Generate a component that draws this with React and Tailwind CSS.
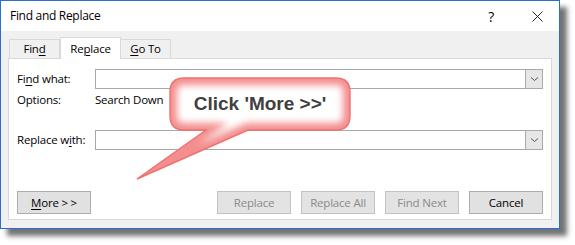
import React from "react";

const U = ({ children }) => <span className="underline underline-offset-2">{children}</span>;

function Combo() {
  return (
    <div className="flex h-[20px] flex-1 border border-[#a9a9a9] bg-white">
      <div className="flex-1" />
      <div className="flex w-[17px] items-center justify-center border-l border-[#a9a9a9] bg-[#e6e6e6]">
        <svg width="9" height="6" viewBox="0 0 9 6">
          <path d="M1 1.5 L4.5 4.5 L8 1.5" fill="none" stroke="#555" strokeWidth="1" />
        </svg>
      </div>
    </div>
  );
}

function Btn({ children, disabled }) {
  return (
    <div
      className={
        "flex h-[23px] w-[74px] items-center justify-center border " +
        (disabled ? "border-[#c2c2c2] bg-[#e3e3e3] text-[#8a8a8a]" : "border-[#adadad] bg-[#e1e1e1] text-black")
      }
    >
      {children}
    </div>
  );
}

const SHAPE =
  "M184 78 H336 Q350 78 350 92 V116 Q350 130 336 130 H248 L137 179 L206 130 H184 Q170 130 170 116 V92 Q170 78 184 78 Z";

export default function App() {
  return (
    <div
      className="relative h-[245px] w-[575px] bg-white text-[11.5px] tracking-[-0.2px]"
      style={{ fontFamily: '"Open Sans", "Noto Sans", sans-serif' }}
    >
      <div className="flex h-[229px] w-[560px] flex-col border border-[#2a6fd0] bg-[#f0f0f0] shadow-[7px_7px_5px_rgba(0,0,0,0.55)]">
        {/* title bar */}
        <div className="flex h-[30px] items-center bg-white pl-[9px] pr-[16px]">
          <div className="flex-1 text-[12px] tracking-[-0.3px] text-black">Find and Replace</div>
          <div className="mr-[38px] text-[14px] text-black">?</div>
          <svg width="11" height="11" viewBox="0 0 11 11">
            <path d="M0.5 0.5 L10.5 10.5 M10.5 0.5 L0.5 10.5" stroke="#222" strokeWidth="1" />
          </svg>
        </div>
        {/* tabs */}
        <div className="flex h-[27px] items-end pl-[8px] pt-[7px]">
          <div className="flex h-[19px] w-[51px] items-center justify-center border border-b-0 border-[#d9d9d9]">
            Fin<U>d</U>
          </div>
          <div className="relative z-10 -mb-px flex h-[22px] w-[61px] items-center justify-center border border-b-0 border-[#d9d9d9] bg-white">
            Re<U>p</U>lace
          </div>
          <div className="flex h-[19px] w-[50px] items-center justify-center border border-b-0 border-l-0 border-[#d9d9d9]">
            <U>G</U>o To
          </div>
        </div>
        {/* panel */}
        <div className="mx-[7px] flex h-[162px] flex-col border border-[#d9d9d9] bg-white px-[8px] pt-[10px] text-black">
          <div className="flex items-center">
            <div className="w-[78px]">Fi<U>n</U>d what:</div>
            <Combo />
          </div>
          <div className="mt-[1px] flex h-[19px] items-center">
            <div className="w-[78px]">Options:</div>
            <div>Search Down</div>
          </div>
          <div className="mt-[21px] flex items-center">
            <div className="w-[78px]">Replace w<U>i</U>th:</div>
            <Combo />
          </div>
          <div className="mt-[41px] flex items-center">
            <Btn>
              <span className="whitespace-pre">
                <U>M</U>ore &gt; &gt;
              </span>
            </Btn>
            <div className="flex-1" />
            <div className="flex gap-[10px]">
              <Btn disabled>Replace</Btn>
              <Btn disabled>Replace All</Btn>
              <Btn disabled>Find Next</Btn>
              <Btn>Cancel</Btn>
            </div>
          </div>
        </div>
      </div>

      {/* callout */}
      <svg className="absolute left-0 top-0" width="575" height="245" viewBox="0 0 575 245">
        <defs>
          <clipPath id="cc">
            <path d={SHAPE} />
          </clipPath>
          <filter id="bl" x="-20%" y="-20%" width="140%" height="140%">
            <feGaussianBlur stdDeviation="3.5" />
          </filter>
        </defs>
        <path d={SHAPE} fill="#ffffff" />
        <g clipPath="url(#cc)">
          <path d={SHAPE} fill="none" stroke="#f38e8e" strokeWidth="14" filter="url(#bl)" />
        </g>
        <path d={SHAPE} fill="none" stroke="#f07070" strokeWidth="1.4" />
      </svg>
      <div
        className="absolute left-[170px] top-[78px] flex h-[52px] w-[180px] items-center justify-center text-[19px] font-bold tracking-normal text-[#404040]"
        style={{ fontFamily: '"Liberation Sans", Arial, sans-serif' }}
      >
        Click 'More &gt;&gt;'
      </div>
    </div>
  );
}
